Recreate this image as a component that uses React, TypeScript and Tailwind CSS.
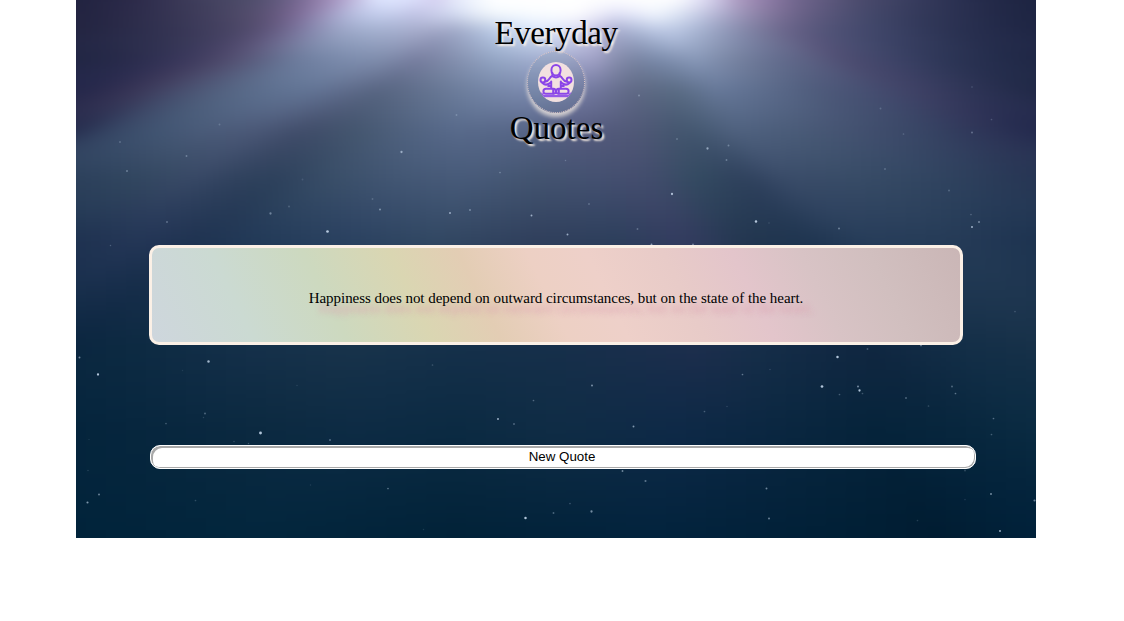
import React from "react";

type Stop = [number, string];
type Row = { y: number; stops: Stop[] };
type Rgb = [number, number, number];

// Colours of the night sky, one horizontal ramp per height.
const sky: Row[] = [
  { y: 0, stops: [[0, "#20223f"], [60, "#2c2a4a"], [120, "#3f3d5b"], [180, "#504f6c"], [215, "#6a6088"], [245, "#9480ac"], [270, "#b4a4cf"], [300, "#dfe6ff"], [335, "#e0e6ff"], [358, "#d4cdf0"], [390, "#eef5ff"], [420, "#ffffff"], [600, "#ffffff"], [630, "#dfe0fa"], [652, "#b9a8cc"], [685, "#9480ac"], [720, "#71668e"], [780, "#4d4c6e"], [840, "#363b5d"], [900, "#262c4c"], [960, "#1c2340"]] },
  { y: 14, stops: [[0, "#20223f"], [60, "#2c2b4a"], [120, "#3d3b59"], [185, "#57506f"], [215, "#745f8c"], [240, "#9185b0"], [270, "#b2b9dc"], [305, "#c8d3f2"], [340, "#c0c2e4"], [380, "#d5def5"], [410, "#f5fbff"], [500, "#ffffff"], [545, "#dfe0fa"], [580, "#f5faff"], [610, "#d4ddf4"], [650, "#a8a5c8"], [690, "#857a9f"], [725, "#685f85"], [780, "#474b6d"], [840, "#333a5b"], [900, "#262c4c"], [960, "#1c2340"]] },
  { y: 30, stops: [[0, "#21233f"], [60, "#2b2c4b"], [120, "#3a3958"], [170, "#4c4868"], [200, "#635a80"], [220, "#76709a"], [240, "#8a8db2"], [270, "#9da9c9"], [310, "#a6b2d1"], [350, "#a5a9c9"], [375, "#9aa2c2"], [400, "#aab8d6"], [430, "#c5d6f2"], [460, "#dbe8fc"], [495, "#dde2f8"], [520, "#c5c3e5"], [545, "#9fa6c8"], [565, "#b2bfdc"], [590, "#c0cdea"], [620, "#a8b5d3"], [650, "#8e97b8"], [685, "#777799"], [715, "#645f85"], [750, "#4f5377"], [810, "#3c4366"], [870, "#2b3253"], [960, "#1d2442"]] },
  { y: 60, stops: [[0, "#1f2442"], [60, "#2a2c4c"], [100, "#36355a"], [130, "#443f61"], [160, "#545172"], [190, "#5d6485"], [220, "#6b7b9c"], [270, "#7b8bac"], [305, "#7f8dac"], [340, "#757b9d"], [370, "#7f8aa9"], [420, "#93a5c4"], [470, "#a3aed0"], [520, "#9f9fc5"], [550, "#78829f"], [580, "#7888a8"], [620, "#8898b8"], [660, "#75819f"], [700, "#636d8e"], [740, "#595d80"], [770, "#4d4b70"], [810, "#3f4569"], [870, "#2c3556"], [960, "#1e2644"]] },
  { y: 90, stops: [[0, "#22264a"], [30, "#2c2b4d"], [65, "#3c3859"], [100, "#464c6c"], [150, "#546482"], [200, "#5f7292"], [235, "#637596"], [270, "#5f6c8c"], [305, "#566480"], [360, "#667693"], [410, "#7485a6"], [460, "#7d8bb0"], [510, "#757ba3"], [555, "#5f6885"], [600, "#596b83"], [640, "#67799a"], [690, "#5c6c8c"], [740, "#4e5b7b"], [790, "#464f72"], [840, "#3f4165"], [890, "#2f3557"], [960, "#1f2745"]] },
  { y: 130, stops: [[0, "#242a4b"], [30, "#344362"], [80, "#415572"], [130, "#4b5c7a"], [180, "#4b5877"], [230, "#404c69"], [280, "#44566f"], [330, "#50627f"], [380, "#586a8b"], [450, "#566587"], [500, "#565c80"], [560, "#505877"], [610, "#42566e"], [660, "#506280"], [720, "#4a5b78"], [780, "#435170"], [850, "#374464"], [910, "#2d3356"], [960, "#22284c"]] },
  { y: 180, stops: [[0, "#2b3f5a"], [60, "#31465f"], [110, "#384966"], [160, "#2f415d"], [200, "#2c405b"], [250, "#384d67"], [320, "#425673"], [390, "#475a79"], [460, "#42536f"], [520, "#435070"], [570, "#434c6d"], [620, "#334a61"], [670, "#2d3f5b"], [710, "#394b68"], [780, "#374b66"], [860, "#304460"], [960, "#263553"]] },
  { y: 240, stops: [[0, "#1e3250"], [60, "#243657"], [120, "#1f3351"], [180, "#223a58"], [270, "#2a4160"], [360, "#324863"], [460, "#303f5c"], [540, "#2d3f5c"], [610, "#343c60"], [670, "#22364f"], [730, "#1f3550"], [790, "#273d5a"], [880, "#253b57"], [960, "#1d3350"]] },
  { y: 345, stops: [[0, "#0b2640"], [60, "#0d2a42"], [180, "#15304a"], [280, "#18334b"], [380, "#15304a"], [480, "#162f4a"], [620, "#1d2e4d"], [680, "#162e49"], [730, "#132a45"], [790, "#102640"], [880, "#132e47"], [960, "#173149"]] },
  { y: 430, stops: [[0, "#04243c"], [180, "#0b2940"], [280, "#0d2b44"], [380, "#0b2a42"], [480, "#0f2c45"], [600, "#0e2947"], [720, "#09263f"], [800, "#05233a"], [880, "#07263d"], [960, "#0a2b42"]] },
  { y: 538, stops: [[0, "#00233a"], [180, "#02263d"], [380, "#012238"], [580, "#02233d"], [780, "#001f35"], [860, "#001c31"], [960, "#00213a"]] },
];

const parse = (hex: string): Rgb => [1, 3, 5].map((i) => parseInt(hex.slice(i, i + 2), 16)) as Rgb;
const mix = (a: Rgb, b: Rgb, t: number): Rgb => [a[0] + (b[0] - a[0]) * t, a[1] + (b[1] - a[1]) * t, a[2] + (b[2] - a[2]) * t];

function sample({ stops }: Row, x: number): Rgb {
  if (x <= stops[0][0]) return parse(stops[0][1]);
  for (let i = 1; i < stops.length; i++) {
    if (x <= stops[i][0]) {
      const [x0, c0] = stops[i - 1];
      const [x1, c1] = stops[i];
      return mix(parse(c0), parse(c1), (x - x0) / (x1 - x0));
    }
  }
  return parse(stops[stops.length - 1][1]);
}

// Between two ramps the colours travel along rays from a light above the top edge.
const LIGHT = { x: 490, height: 95 };

function colorAt(x: number, y: number): string {
  const yc = Math.min(537.9, Math.max(0, y));
  let i = 0;
  while (yc >= sky[i + 1].y) i++;
  const a = sky[i];
  const b = sky[i + 1];
  const along = (row: Row) => LIGHT.x + ((x - LIGHT.x) * (row.y + LIGHT.height)) / (yc + LIGHT.height);
  const c = mix(sample(a, along(a)), sample(b, along(b)), (yc - a.y) / (b.y - a.y));
  return `rgb(${c.map((v) => Math.round(v)).join(",")})`;
}

const strips = Array.from({ length: 150 }, (_, i) => -30 + i * 4);
const columns = Array.from({ length: 49 }, (_, i) => i * 20);

// x, y, opacity, radius
const stars: [number, number, number, number][] = [
  [44, 142, 0.3, 1], [51, 171, 0.45, 1], [110.5, 156, 0.4, 1], [143.5, 124.5, 0.25, 1], [91, 222, 0.4, 1], [194.5, 213.5, 0.5, 1.2], [213, 206.5, 0.25, 1],
  [251.5, 231.5, 1, 1.4], [325.5, 152, 0.7, 1.2], [304, 209.5, 0.6, 1], [296.5, 199, 0.25, 1], [374, 213, 0.8, 1], [394, 210, 0.5, 1], [455.5, 215.5, 0.8, 1],
  [424, 172.5, 0.4, 0.9], [380.5, 115, 0.3, 1], [226.5, 179.5, 0.15, 1], [34.5, 245.5, 0.3, 0.8], [563, 95.5, 0.4, 1], [601, 139, 0.3, 1], [631.5, 148.5, 0.7, 1.2],
  [652.5, 145.5, 0.4, 1], [650.5, 160, 0.4, 1], [596, 194, 0.9, 1.2], [513, 204, 0.3, 1], [680, 221.5, 1, 1.3], [693, 223, 0.2, 0.8], [561.5, 229, 0.35, 1],
  [491.5, 234.5, 0.8, 1], [763, 228.5, 0.5, 1], [896, 227, 0.8, 1.1], [903, 222, 0.6, 1], [895, 214.5, 0.3, 0.9], [873, 190.5, 0.3, 1], [809, 169, 0.3, 1],
  [896, 132.5, 0.4, 1], [804.5, 108.5, 0.25, 1], [827.5, 134, 0.25, 0.9], [915.5, 119.5, 0.25, 0.9], [896, 87, 0.15, 1], [489.5, 160.5, 0.3, 0.8],
  [575.5, 244.5, 0.7, 1], [617, 244.5, 0.5, 1], [3.5, 357.5, 0.6, 1], [22, 374.5, 1, 1.2], [132.5, 361.5, 0.9, 1.3], [356.5, 365, 0.25, 0.9],
  [129, 413.5, 0.4, 1], [127.5, 417.5, 0.2, 0.8], [90, 423.5, 0.35, 0.9], [184.5, 433, 1, 1.5], [158, 441.5, 0.25, 0.8], [172.5, 443.5, 0.3, 0.8],
  [254, 440, 0.45, 1], [457.5, 400.5, 0.4, 0.9], [422, 419, 0.8, 1.1], [438, 424, 0.4, 1], [516, 385.5, 0.6, 1.1], [557.5, 426.5, 0.7, 1],
  [628.5, 411.5, 0.35, 0.9], [666.5, 374.5, 0.5, 0.9], [694, 369.5, 0.2, 0.8], [651, 406.5, 0.2, 0.8], [761.5, 357, 1, 1.3], [746, 386.5, 1, 1.4],
  [782, 386.5, 0.6, 1.1], [783.5, 390.5, 1, 1.2], [786.5, 393.5, 0.3, 0.9], [763.5, 394.5, 0.35, 0.9], [791.5, 349, 0.3, 1], [845, 345.5, 0.6, 0.9],
  [830, 398, 0.4, 1], [876, 386.5, 0.4, 1], [879.5, 393.5, 0.5, 0.9], [852.5, 406, 0.25, 0.9], [917.5, 418.5, 0.45, 0.9], [915.5, 434.5, 0.35, 0.9],
  [939, 311.5, 0.25, 0.9], [11.5, 502.5, 0.7, 1.1], [23, 494.5, 0.6, 1], [119.5, 500.5, 0.25, 0.9], [312, 488.5, 0.5, 0.9], [449.5, 518, 1, 1.3],
  [477.5, 513, 0.4, 1], [515.5, 511.5, 0.65, 1.2], [494, 503.5, 0.3, 0.9], [546.5, 471, 0.6, 1], [569.5, 481, 0.5, 1.1], [690.5, 488.5, 0.6, 1],
  [693, 518.5, 0.55, 1.1], [915, 494, 0.6, 1.1], [924, 531, 0.8, 1.1], [958.5, 500.5, 0.6, 1.1], [841.5, 520.5, 0.2, 0.9], [889, 470.5, 0.25, 1],
  [889, 499.5, 0.15, 0.9], [234.5, 485, 0.15, 0.8], [347.5, 529.5, 0.15, 0.8], [12, 470.5, 0.2, 0.8], [13, 439.5, 0.12, 0.8], [221, 385.5, 0.15, 0.8], [106.5, 370.5, 0.12, 0.8],
];

function NightSky() {
  return (
    <svg className="absolute inset-0" width="960" height="538" viewBox="0 0 960 538" aria-hidden="true">
      <defs>
        <filter id="soften" filterUnits="userSpaceOnUse" x="-30" y="-30" width="1020" height="598" colorInterpolationFilters="sRGB">
          <feGaussianBlur stdDeviation="7" />
        </filter>
        {strips.map((y, i) => (
          <linearGradient key={y} id={`ramp${i}`} gradientUnits="userSpaceOnUse" x1="0" y1="0" x2="960" y2="0">
            {columns.map((x) => (
              <stop key={x} offset={x / 960} stopColor={colorAt(x, y + 2)} />
            ))}
          </linearGradient>
        ))}
      </defs>
      <g filter="url(#soften)">
        {strips.map((y, i) => (
          <rect key={y} x="-30" y={y} width="1020" height="5" fill={`url(#ramp${i})`} />
        ))}
      </g>
      {stars.map(([x, y, opacity, r], i) => (
        <circle key={i} cx={x} cy={y} r={r * 0.95} fill="#d0e2f6" opacity={opacity * 0.85} />
      ))}
    </svg>
  );
}

function MeditationIcon() {
  return (
    <svg width="36" height="40" viewBox="0 0 36 40" className="rounded-[50%] bg-[#f2e0e0]" aria-hidden="true">
      <g fill="none" stroke="#8b45e8" strokeWidth="2" strokeLinejoin="round" strokeLinecap="round">
        <ellipse cx="18" cy="8.2" rx="4.6" ry="5.2" />
        <path d="M14.4 11v3.2Q18 16.6 21.6 14.2V11" />
        <path d="M13.8 14.2C11.5 14.8 11 20 7.2 19.4M22.2 14.2C24.5 14.8 25 20 28.8 19.4" />
        <circle cx="4.9" cy="18" r="2.4" />
        <circle cx="31.1" cy="18" r="2.4" />
        <path d="M4.5 21Q8 24.4 12.8 20.6M31.5 21Q28 24.4 23.2 20.6" />
        <path d="M13.2 19.5V26.2M22.8 19.5V26.2M13.2 24H10.2M22.8 24H25.8" />
        <rect x="5.4" y="26.8" width="12.4" height="5" rx="2.5" />
        <rect x="18.2" y="26.8" width="12.4" height="5" rx="2.5" />
        <path d="M15.2 27v4.6M20.8 27v4.6M1.5 30.5l3 2M34.5 30.5l-3 2" />
      </g>
      <rect y="33" width="36" height="2.2" fill="#9558e8" />
    </svg>
  );
}

export default function App() {
  return (
    <div className="flex h-[621px] w-full flex-col overflow-hidden bg-white pl-[76px] text-black">
      <main className="relative h-[538px] w-[960px] overflow-hidden">
        <NightSky />
        <div className="relative flex flex-col items-center">
          <h1 className="flex flex-col items-center pt-[14px] font-['Liberation_Serif',serif] text-[33px] leading-[38px] font-normal [text-shadow:2px_2px_2px_linen]">
            <span className="tracking-[-0.4px]">Everyday</span>
            <span className="-mt-px flex h-[62px] w-[58px] items-center justify-center rounded-[50%] border border-dotted border-[#e0c8c8] bg-[#5c7890]/15 shadow-[0_4px_4px_rgba(250,240,230,0.75)]">
              <MeditationIcon />
            </span>
            <span className="-mt-1 ml-px">Quotes</span>
          </h1>
          <section className="mt-[98px] flex h-[100px] w-[814px] items-center justify-center rounded-[10px] border-[3px] border-[#fbf0e6] bg-[linear-gradient(64deg,#ced6dd_0%,#cbdad2_12%,#cdd9bf_23%,#dad6b2_33%,#e3cdb4_41%,#edd0c4_49%,#eed0c9_56%,#e8cbc8_65%,#e3c5cb_73%,#d8c3c5_81%,#d1bfbf_89%,#cab6b6_100%)]">
            <p className="pt-[5px] font-['Liberation_Serif',serif] text-[15px] leading-5 tracking-[-0.05px] whitespace-nowrap [text-shadow:10px_10px_5px_rgba(220,160,178,0.75)]">
              Happiness does not depend on outward circumstances, but on the state of the heart.
            </p>
          </section>
          <button className="mt-[100px] ml-[14px] h-6 w-[826px] rounded-[10px] border border-white bg-white pr-[2px] pb-px font-['Liberation_Sans',sans-serif] text-[13.333px] leading-4 shadow-[inset_2px_2px_0_#a9a9a9,inset_-1px_-1px_0_#a9a9a9]">
            New Quote
          </button>
        </div>
      </main>
    </div>
  );
}
